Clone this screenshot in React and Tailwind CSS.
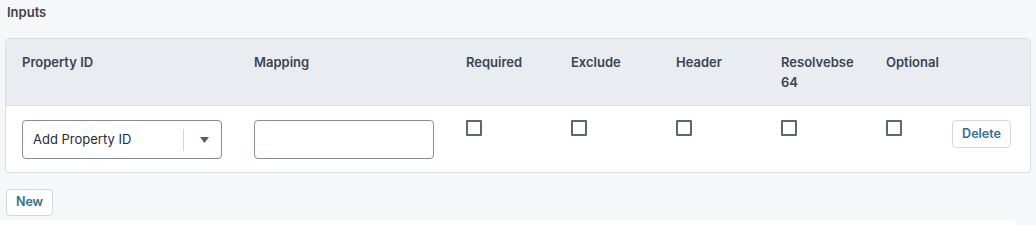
import React from "react";

const columns = ["Required", "Exclude", "Header", "Resolvebse 64", "Optional"];

const Checkbox = () => (
  <div className="w-4 h-4 border-2 border-[#5f6670] rounded-[1px] bg-white" />
);

const InputsTable = () => {
  return (
    <div className="border border-[#d9dee4] rounded bg-white overflow-hidden">
      <div className="grid grid-cols-[232px_212px_105px_105px_105px_105px_66px_1fr] bg-[#e9edf2] border-b border-[#d9dee4] pt-[13px] pb-[13px] h-[67px]">
        <div className="pl-4 text-[13px] leading-5 font-semibold text-[#3c4452]">
          Property ID
        </div>
        <div className="pl-4 text-[13px] leading-5 font-semibold text-[#3c4452]">
          Mapping
        </div>
        {columns.map((col) => (
          <div
            key={col}
            className="pl-4 text-[13px] leading-5 font-semibold text-[#3c4452] whitespace-nowrap"
          >
            {col === "Resolvebse 64" ? (
              <>
                Resolvebse
                <br />
                64
              </>
            ) : (
              col
            )}
          </div>
        ))}
        <div />
      </div>
      <div className="grid grid-cols-[232px_212px_105px_105px_105px_105px_66px_1fr] pt-[14px] pb-[13px]">
        <div className="pl-4">
          <div className="flex items-center w-[200px] h-[39px] border border-[#868c94] rounded bg-white">
            <span className="flex-1 pl-[10px] text-[13px] text-[#262b33]">
              Add Property ID
            </span>
            <div className="w-px h-[22px] bg-[#d2d5d9]" />
            <div className="w-[37px] flex items-center pl-[16px]">
              <svg width="9" height="6" viewBox="0 0 9 6">
                <path d="M0 0 L9 0 L4.5 6 Z" fill="#565e68" />
              </svg>
            </div>
          </div>
        </div>
        <div className="pl-4">
          <input
            type="text"
            className="block w-[180px] h-[39px] border border-[#868c94] rounded bg-white outline-none px-2 text-[13px]"
          />
        </div>
        {columns.map((col) => (
          <div key={col} className="pl-4">
            <Checkbox />
          </div>
        ))}
        <div className="pl-4">
          <button className="w-[59px] h-[28px] border border-[#cfd9de] rounded bg-white text-[12.5px] font-semibold text-[#33708a]">
            Delete
          </button>
        </div>
      </div>
    </div>
  );
};

export default function App() {
  return (
    <div
      className="bg-[#f6f7f9] w-[1036px] h-[225px] overflow-hidden"
      style={{ fontFamily: "Inter, 'Noto Sans', sans-serif" }}
    >
      <div className="px-[5px] pt-[2px]">
        <h3 className="pl-[2px] text-[13px] leading-5 font-semibold text-[#3c4452]">
          Inputs
        </h3>
        <div className="mt-4 w-[1026px]">
          <InputsTable />
        </div>
        <button className="mt-4 ml-px w-[47px] h-[27px] border border-[#cfd9de] rounded bg-white text-[12.5px] font-semibold text-[#33708a]">
          New
        </button>
      </div>
      <div className="mt-1 w-[1015px] h-4 bg-white" />
    </div>
  );
}
